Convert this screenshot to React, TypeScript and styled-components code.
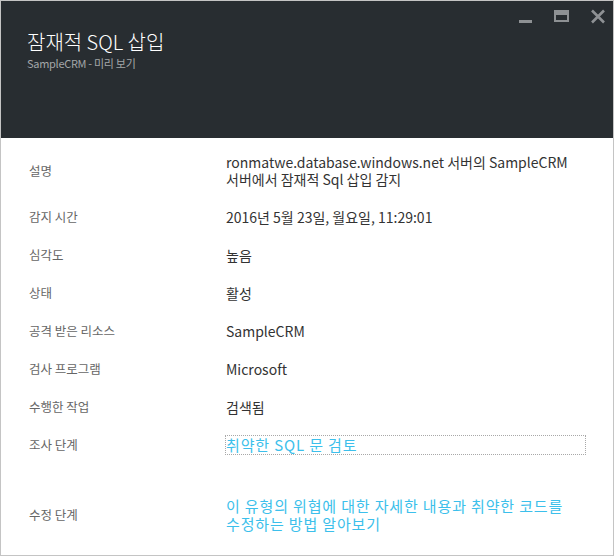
import styled, { createGlobalStyle } from "styled-components";

type Detail = {
  label: string;
  value: string;
  link?: boolean;
  focused?: boolean;
  spaced?: boolean;
};

const details: Detail[] = [
  {
    label: "설명",
    value: "ronmatwe.database.windows.net 서버의 SampleCRM 서버에서 잠재적 Sql 삽입 감지",
  },
  { label: "감지 시간", value: "2016년 5월 23일, 월요일, 11:29:01" },
  { label: "심각도", value: "높음" },
  { label: "상태", value: "활성" },
  { label: "공격 받은 리소스", value: "SampleCRM" },
  { label: "검사 프로그램", value: "Microsoft" },
  { label: "수행한 작업", value: "검색됨" },
  { label: "조사 단계", value: "취약한 SQL 문 검토", link: true, focused: true },
  {
    label: "수정 단계",
    value: "이 유형의 위협에 대한 자세한 내용과 취약한 코드를 수정하는 방법 알아보기",
    link: true,
    spaced: true,
  },
];

const App = () => {
  return (
    <>
      <GlobalStyle />
      <Blade>
        <Header>
          <Controls>
            <CtrlButton aria-label="minimize">
              <svg width="16" height="16" viewBox="0 0 16 16">
                <rect x="3" y="11" width="13" height="3" fill="#8e9194" />
              </svg>
            </CtrlButton>
            <CtrlButton aria-label="maximize">
              <svg width="16" height="16" viewBox="0 0 16 16">
                <rect x="1" y="1" width="15" height="12" fill="#8e9194" />
                <rect x="3" y="6" width="11" height="5" fill="#282d31" />
              </svg>
            </CtrlButton>
            <CtrlButton aria-label="close">
              <svg width="16" height="16" viewBox="0 0 16 16">
                <path d="M2 1.5 L14 13.5 M14 1.5 L2 13.5" stroke="#8e9194" strokeWidth="2.6" />
              </svg>
            </CtrlButton>
          </Controls>
          <Title>잠재적 SQL 삽입</Title>
          <Subtitle>SampleCRM - 미리 보기</Subtitle>
        </Header>
        <Body>
          {details.map((d) => (
            <Row key={d.label} $spaced={d.spaced}>
              <Label>{d.label}</Label>
              {d.link ? (
                <LinkValue href="#" $focused={d.focused}>
                  {d.value}
                </LinkValue>
              ) : (
                <Value>{d.value}</Value>
              )}
            </Row>
          ))}
        </Body>
      </Blade>
    </>
  );
};

export default App;

const GlobalStyle = createGlobalStyle`
  html, body {
    margin: 0;
    padding: 0;
    background: #ffffff;
  }
  * {
    box-sizing: border-box;
  }
`;

const Blade = styled.div`
  width: 614px;
  height: 556px;
  border: 1px solid #c4c4c4;
  background: #ffffff;
  font-family: "Noto Sans CJK KR", "Noto Sans", sans-serif;
  display: flex;
  flex-direction: column;
`;

const Header = styled.div`
  height: 137px;
  background: #282d31;
  padding: 27px 0 0 26px;
  position: relative;
`;

const Controls = styled.div`
  position: absolute;
  top: 8px;
  right: 7px;
  display: flex;
  gap: 21px;
`;

const CtrlButton = styled.div`
  width: 16px;
  height: 16px;
  display: flex;
  svg {
    display: block;
  }
`;

const Title = styled.div`
  color: #ffffff;
  font-size: 20px;
  font-weight: 300;
  line-height: 28px;
`;

const Subtitle = styled.div`
  color: #a3a6a8;
  font-size: 11px;
  line-height: 14px;
  letter-spacing: -0.3px;
`;

const Body = styled.div`
  padding: 6px 28px 0 28px;
  display: flex;
  flex-direction: column;
`;

const Row = styled.div<{ $spaced?: boolean }>`
  display: grid;
  grid-template-columns: 197px 1fr;
  align-items: center;
  padding: 10px 0;
  min-height: 38px;
  margin-top: ${(p) => (p.$spaced ? "23px" : "0")};
`;

const Label = styled.div`
  color: #666666;
  font-size: 12.5px;
  line-height: 18px;
`;

const Value = styled.div`
  color: #333333;
  font-size: 14px;
  line-height: 17px;
  word-break: keep-all;
  padding-right: 6px;
`;

const LinkValue = styled.a<{ $focused?: boolean }>`
  color: #3cbfeb;
  font-size: 15px;
  line-height: 18px;
  text-decoration: none;
  letter-spacing: 0.85px;
  word-break: keep-all;
  outline: ${(p) => (p.$focused ? "1px dotted #a8a8a8" : "none")};
  outline-offset: 0;
`;
